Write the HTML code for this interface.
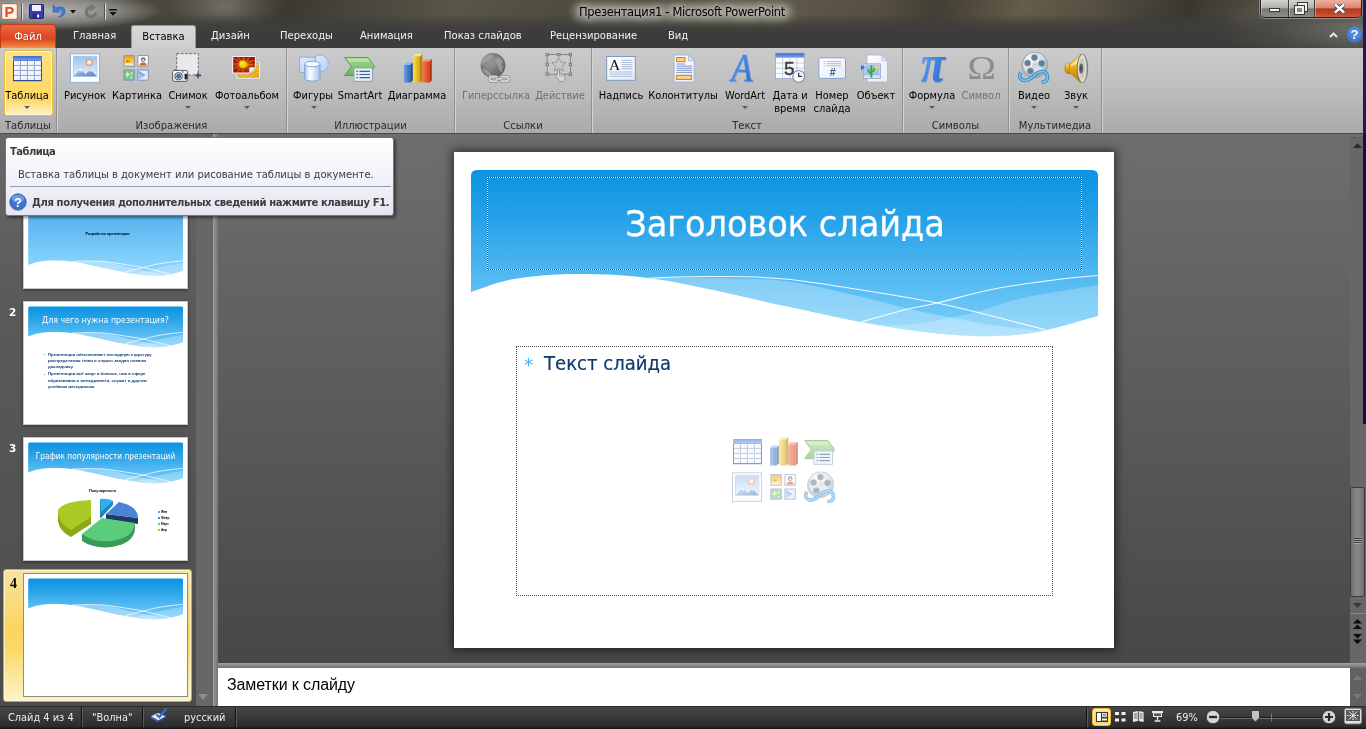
<!DOCTYPE html>
<html lang="ru">
<head>
<meta charset="utf-8">
<title>Презентация1 - Microsoft PowerPoint</title>
<style>
*{box-sizing:border-box;margin:0;padding:0}
html,body{width:1366px;height:729px;overflow:hidden;background:#5a5a5a}
body{position:relative;-webkit-font-smoothing:antialiased;font-family:"DejaVu Sans","Liberation Sans",sans-serif;font-size:10px;color:#000}
.abs{position:absolute}
#titlebar{position:absolute;left:0;top:0;width:1366px;height:48px;background:#45423e;overflow:hidden}
#tabrow{position:absolute;left:0;top:24px;width:1366px;height:24px;overflow:hidden}
#ribbon{position:absolute;left:0;top:48px;width:1366px;height:85px;background:linear-gradient(#cbcbcb,#bdbdbd 50%,#aaaaaa)}
#ribline{position:absolute;left:0;top:133px;width:1366px;height:1px;background:#484848}
#work{position:absolute;left:0;top:134px;width:1366px;height:572px;background:linear-gradient(#6e6e6e,#5c5c5c 45%,#444)}
#status{position:absolute;left:0;top:705px;width:1366px;height:24px;background:linear-gradient(#4a4a4a,#2e2e2e)}
#rightedge{position:absolute;left:1363px;top:0;width:3px;height:424px;background:linear-gradient(#1d1b54 0,#1d1b54 133px,#100d50 134px,#100d50 100%)}
#titlebar,#tabrow,#ribbon,#work,#status,#tip{will-change:transform}
/* ---- work area ---- */
#leftpane{position:absolute;left:0;top:0;width:213px;height:572px;background:linear-gradient(#686868,#5a5a5a 30%,#4c4c4c);overflow:hidden}
#lp-track{position:absolute;left:196px;top:0;width:17px;height:572px;background:#676767}
.thumb{position:absolute;left:23px;width:165px;height:124px;background:#fff;border:1px solid #c9c9c9;overflow:hidden;box-shadow:0 1px 3px rgba(0,0,0,.45)}
.thumb>svg{position:absolute;left:0;top:0}
.thumb.t4{border-color:#8d8d8d;box-shadow:none}
.tnum{position:absolute;left:9px;width:12px;font-weight:bold;font-size:10.5px;color:#fff;line-height:14px}
.tnum.sel4{color:#000;font-family:"Liberation Serif",serif;font-size:14px;left:10px}
.ttitle{position:absolute;left:0;width:163px;text-align:center;color:#fff;font-family:"DejaVu Sans",sans-serif;font-size:8.9px;line-height:14px;white-space:nowrap;letter-spacing:0;transform:scaleX(.9);transform-origin:50% 50%}
.t1title{font-family:"Liberation Sans",sans-serif;position:absolute;left:0;top:65px;width:163px;text-align:center;color:#000;font-weight:bold;font-size:3.6px;line-height:6px;white-space:nowrap;padding-left:4px}
.tbody{font-family:"Liberation Sans",sans-serif;position:absolute;left:20px;top:49.5px;list-style:none;font-size:4.25px;line-height:6.3px;color:#0c3b78;font-weight:bold;white-space:nowrap}
.tbody li{position:relative;padding-left:4px;margin-bottom:1px}
.tbody li:before{content:"";position:absolute;left:0;top:2.5px;width:1px;height:1px;background:#2fb0f0}
.ctitle{font-family:"Liberation Sans",sans-serif;position:absolute;left:65px;top:51px;font-size:3.8px;font-weight:bold;line-height:5px;white-space:nowrap}
.leg{font-family:"Liberation Sans",sans-serif;position:absolute;left:134px;font-size:3.2px;line-height:4px;font-weight:bold;white-space:nowrap}
.leg i{display:inline-block;width:2px;height:2px;margin-right:1px;vertical-align:middle}
#sel{position:absolute;left:3px;top:435px;width:189px;height:133px;border:1.5px solid #dca136;border-radius:3px;background:linear-gradient(#f7e3a0,#fcd55f 45%,#fbd868 60%,#fdf4c8);box-shadow:inset 0 0 0 1px rgba(255,250,220,.7)}
#vsplit{position:absolute;left:213px;top:0;width:5px;height:572px;background:linear-gradient(90deg,#a2a2a2,#8a8a8a 40%,#747474)}
#slide{position:absolute;left:454px;top:18px;width:660px;height:496px;background:#fff;box-shadow:0 0 9px 2px rgba(0,0,0,.55)}
#ph-title{position:absolute;left:33px;top:25px;width:595px;height:93px;border:1px solid rgba(20,45,80,.75)}
#ph-title:after{content:'';position:absolute;left:-1px;top:-1px;right:-1px;bottom:-1px;border:1px dotted #fff}
#slidetitle{position:absolute;left:33px;top:48px;width:596px;text-align:center;color:#fff;font-family:"DejaVu Sans",sans-serif;font-size:35.7px;line-height:48px;white-space:nowrap;letter-spacing:0;transform:scaleX(.941);transform-origin:50% 50%;-webkit-text-stroke:.35px #fff}
#ph-body{position:absolute;left:62px;top:194px;width:537px;height:250px;border:1px dotted #4a4a4a}
#bul{position:absolute;left:70px;top:202px;color:#31b6fd;font-size:18px;line-height:22px}
#slidetext{position:absolute;left:90px;top:200px;color:#0b3a6e;font-family:"DejaVu Sans",sans-serif;font-size:19.5px;line-height:24px;white-space:nowrap;letter-spacing:0;transform:scaleX(.927);transform-origin:0 50%;-webkit-text-stroke:.2px #0b3a6e}
#vscroll{position:absolute;left:1350px;top:3px;width:16px;height:526px;background:#676767;border-top:1px solid #5a5a5a}
#vthumb{position:absolute;left:0px;top:349px;width:15px;height:110px;border:1px solid #3c3c3c;border-radius:2px;background:linear-gradient(90deg,#6e6e6e,#8a8a8a 50%,#707070)}
#vthumb i{display:block;width:7px;height:1px;background:#3a3a3a;margin:0 3px;position:relative;top:50px;margin-bottom:1px;box-shadow:0 1px 0 #aaa}
#vsep{position:absolute;left:0;top:475px;width:16px;height:1px;background:#8a8a8a}
#hsplit{position:absolute;left:218px;top:529px;width:1148px;height:5px;background:linear-gradient(#a0a0a0,#8a8a8a 50%,#6e6e6e)}
#notes{position:absolute;left:218px;top:534px;width:1132px;height:38px;background:#fff;font-family:"Liberation Sans",sans-serif;font-size:16px;line-height:19px;padding:7px 0 0 9px;color:#000;letter-spacing:-.1px}
#nscroll{position:absolute;left:1350px;top:534px;width:16px;height:38px;background:#616161}
/* ---- title bar ---- */
#titlebar{height:48px;background:
 radial-gradient(ellipse 150px 40px at 1366px 28px,rgba(150,148,138,.6),rgba(120,118,110,.25) 60%,rgba(100,100,95,0) 100%),
 linear-gradient(rgba(60,60,58,0) 0,rgba(60,60,58,0) 14px,rgba(61,61,59,.75) 24px,#3d3d3b 31px,#3b3b3a 48px),
 linear-gradient(112deg,rgba(0,0,0,0) 0,rgba(0,0,0,0) 17%,rgba(40,36,28,.35) 21%,rgba(0,0,0,0) 25%,rgba(130,124,104,.28) 33%,rgba(0,0,0,0) 40%,rgba(35,32,26,.35) 47%,rgba(0,0,0,0) 52%,rgba(120,112,90,.3) 58%,rgba(0,0,0,0) 64%,rgba(40,36,30,.4) 68%,rgba(125,116,92,.32) 74%,rgba(0,0,0,0) 80%,rgba(30,28,24,.4) 86%,rgba(110,102,84,.25) 91%,rgba(20,20,20,.5) 100%),
 radial-gradient(ellipse 60px 30px at 225px 6px,rgba(140,136,124,.6),rgba(120,116,104,0) 100%),
 linear-gradient(90deg,#66635b 0,#524f46 9%,#47433a 13%,#48443a 30%,#565144 45%,#524d41 60%,#585243 75%,#4a463d 90%,#3a3835 100%)}
#glow-qat{position:absolute;left:-30px;top:-8px;width:190px;height:38px;background:radial-gradient(ellipse at 40% 50%,rgba(205,205,205,.8),rgba(180,180,180,.5) 45%,rgba(140,140,140,0) 72%)}
.qsep{position:absolute;top:3px;width:2px;height:17px;background:linear-gradient(90deg,#555 50%,#ddd 50%)}
#wglow{position:absolute;left:574px;top:4px;width:218px;height:16px;border-radius:8px;background:rgba(190,190,180,.62);filter:blur(5px)}
#wtitle{position:absolute;left:478px;top:4px;width:408px;text-align:center;font-size:11.5px;letter-spacing:-.34px;line-height:16px;color:#000;white-space:nowrap;
 text-shadow:0 0 5px rgba(200,200,192,.95),0 0 8px rgba(190,190,182,.95),0 0 11px rgba(180,180,172,.85),0 0 14px rgba(175,175,168,.75),0 0 6px rgba(200,200,192,.9)}
#wbtns{position:absolute;left:1260px;top:0;width:102px;height:18px;border:1px solid #1f1f1f;border-top:0;border-radius:0 0 5px 5px;overflow:hidden;box-shadow:0 0 0 1px rgba(255,255,255,.35)}
#wmin,#wmax{position:absolute;top:0;height:17px;background:linear-gradient(#d2d2ce,#b2b2ac 46%,#7a786f 52%,#8e8c84);border-right:1px solid #3a3a38;box-shadow:inset 1px 0 0 rgba(255,255,255,.35)}
#wmin{left:0;width:28px}#wmax{left:28px;width:26px}
#wmin i{position:absolute;left:8px;top:8px;width:11px;height:4px;background:#f4f4f4;border:1px solid #3a3a3a}
#wmax i{position:absolute;left:9px;top:3px;width:9px;height:8px;border:2px solid #f0f0f0;outline:1px solid #3a3a3a}
#wmax b{position:absolute;left:6px;top:6px;width:9px;height:8px;border:2px solid #f0f0f0;outline:1px solid #3a3a3a;background:#8a8880}
#wclose{position:absolute;left:54px;top:0;width:47px;height:17px;background:linear-gradient(#eeb0a0,#dc8472 46%,#b5381a 52%,#c44a2a 85%,#d06040);box-shadow:inset 1px 0 0 rgba(255,255,255,.35)}
#wclose svg{position:absolute;left:19px;top:4px}
/* ---- tab row ---- */
#tabrow{background:none}
#filetab{position:absolute;left:0;top:0;width:56px;height:24px;border-radius:4px 4px 0 0;background:linear-gradient(#ea6a40,#e2502c 40%,#de4724 60%,#ee8038 92%,#f29a48);border:1px solid #c23c14;border-bottom:0;color:#fff;text-align:center;font-size:10px;line-height:23px;text-shadow:0 0 2px rgba(120,30,0,.6)}
.tab{position:absolute;top:1px;height:22px;line-height:22px;color:#f2f2f2;font-size:10px;white-space:nowrap}
#acttab{position:absolute;left:131px;top:1px;width:65px;height:24px;border-radius:3px 3px 0 0;background:linear-gradient(#d8d8d8,#cdcdcd);border:1px solid #9a9a9a;border-bottom:0;color:#000;text-align:center;font-size:10px;line-height:21px}
/* ---- ribbon ---- */
.gsep{position:absolute;top:0;width:2px;height:85px;background:linear-gradient(90deg,#8c8c8c 50%,#d6d6d6 50%);opacity:.9}
.glab{position:absolute;top:71px;height:14px;line-height:14px;text-align:center;font-size:10px;letter-spacing:0;color:#2a2a2a;white-space:nowrap}
.rl{position:absolute;top:41px;width:120px;margin-left:-60px;text-align:center;font-size:9.9px;letter-spacing:0;line-height:13px;color:#000;white-space:nowrap}
.rl.dis{color:#727272}
.dd{position:absolute;top:58px;width:0;height:0;border:3px solid transparent;border-top:3.5px solid #5c5c5c;border-bottom:0}
#hotbtn{position:absolute;left:4px;top:2px;width:49px;height:66px;border:1px solid #edbd3e;border-radius:3px;background:linear-gradient(#fde38a,#fddb6e 35%,#fdd865 75%,#fdeaa8 92%,#fef2c8);box-shadow:inset 0 0 0 1px rgba(255,248,215,.85)}
.ic{position:absolute;top:4px;overflow:visible}
/* ---- tooltip ---- */
#tip{position:absolute;left:5px;top:137px;width:389px;height:79px;border:1px solid #767676;border-radius:3px;background:linear-gradient(#fff,#f4f4fa 45%,#e5e5f1);box-shadow:2px 2px 3px rgba(0,0,0,.45);color:#3c3c3c}
#tip-h{position:absolute;left:4px;top:7px;font-weight:bold;font-size:10px;letter-spacing:-.55px;line-height:14px;white-space:nowrap}
#tip-d{position:absolute;left:12px;top:30px;font-size:10px;letter-spacing:-.03px;line-height:14px;white-space:nowrap}
#tip-line{position:absolute;left:4px;top:48px;width:381px;height:1px;background:#8f9cab}
#tip-f{position:absolute;left:26px;top:58px;font-weight:bold;font-size:10px;letter-spacing:-.38px;line-height:14px;white-space:nowrap}
/* ---- status bar ---- */
#status{top:706px;height:23px;background:linear-gradient(#2a2a2a 0,#2a2a2a 1px,#454545 1px,#3c3c3c 40%,#2b2b2b 90%,#111 100%)}
.st{position:absolute;top:4.5px;line-height:14px;font-size:9.8px;letter-spacing:0px;color:#ececec;white-space:nowrap}
.ssep{position:absolute;top:1px;width:2px;height:20px;background:linear-gradient(90deg,#141414 50%,#5c5c5c 50%)}
#vnorm{position:absolute;left:1092px;top:2px;width:19px;height:18px;border:1px solid #e9b53a;border-radius:3px;background:linear-gradient(#fde9a2,#fbd55e 50%,#fdd868);box-shadow:inset 0 0 0 1px rgba(255,245,200,.7)}

</style>
</head>
<body>
<svg width="0" height="0" style="position:absolute">
<defs>
<linearGradient id="bluegrad" x1="0" y1="18" x2="0" y2="184" gradientUnits="userSpaceOnUse">
<stop offset="0" stop-color="#0b93e2"/><stop offset="0.3" stop-color="#27a2e8"/><stop offset="0.6" stop-color="#4db6f1"/><stop offset="1" stop-color="#7ccffa"/>
</linearGradient>
<linearGradient id="bluegrad1" x1="0" y1="18" x2="0" y2="446" gradientUnits="userSpaceOnUse">
<stop offset="0" stop-color="#0c94e2"/><stop offset="0.45" stop-color="#5ab3ee"/><stop offset="0.85" stop-color="#84d0fb"/><stop offset="1" stop-color="#8ad4fc"/>
</linearGradient>
<clipPath id="clip-slidebg"><path d="M17,24 Q17,18 23,18 L638,18 Q644,18 644,24 L644,164.0  C635.5,166.3 607.0,174.8 593.0,178.0 C579.0,181.2 572.0,182.0 560.0,183.0 C548.0,184.0 536.0,184.5 521.0,184.0 C506.0,183.5 489.0,182.3 470.0,180.0 C451.0,177.7 430.2,174.3 407.0,170.0 C383.8,165.7 364.2,161.0 331.0,154.0 C297.8,147.0 242.3,133.3 208.0,128.0 C173.7,122.7 149.7,122.2 125.0,122.0 C100.3,121.8 78.0,124.0 60.0,127.0 C42.0,130.0 24.2,137.8 17.0,140.0 Z"/></clipPath>
<symbol id="slidebg" viewBox="0 0 660 496">
<rect width="660" height="496" fill="#fff"/>
<path d="M17,24 Q17,18 23,18 L638,18 Q644,18 644,24 L644,164.0  C635.5,166.3 607.0,174.8 593.0,178.0 C579.0,181.2 572.0,182.0 560.0,183.0 C548.0,184.0 536.0,184.5 521.0,184.0 C506.0,183.5 489.0,182.3 470.0,180.0 C451.0,177.7 430.2,174.3 407.0,170.0 C383.8,165.7 364.2,161.0 331.0,154.0 C297.8,147.0 242.3,133.3 208.0,128.0 C173.7,122.7 149.7,122.2 125.0,122.0 C100.3,121.8 78.0,124.0 60.0,127.0 C42.0,130.0 24.2,137.8 17.0,140.0 Z" fill="url(#bluegrad)"/>
<g clip-path="url(#clip-slidebg)">
<path d="M195.0,126.0 C205.8,126.0 237.3,125.5 260.0,126.0 C282.7,126.5 307.7,126.2 331.0,129.0 C354.3,131.8 379.3,138.3 400.0,143.0 C420.7,147.7 438.8,153.2 455.0,157.0 C471.2,160.8 482.0,162.7 497.0,165.5 C512.0,168.3 529.0,171.8 545.0,174.0 C561.0,176.2 585.0,178.2 593.0,179.0 L644,200 L17,200 Z" fill="#fff" fill-opacity="0.28"/>
<path d="M644.0,133.0 C631.5,135.2 589.0,141.6 569.0,146.0 C549.0,150.4 536.0,156.2 524.0,159.5 C512.0,162.8 510.2,163.2 497.0,165.5 C483.8,167.8 461.2,172.9 445.0,173.5 C428.8,174.1 407.5,169.8 400.0,169.0 L400,200 L644,200 Z" fill="#fff" fill-opacity="0.22"/>
<path d="M195.0,126.0 C205.8,125.8 237.3,124.3 260.0,124.5 C282.7,124.7 304.3,124.4 331.0,127.0 C357.7,129.6 394.7,136.0 420.0,140.0 C445.3,144.0 464.7,147.3 483.0,151.0 C501.3,154.7 511.8,157.5 530.0,162.0 C548.2,166.5 581.7,175.3 592.0,178.0" fill="none" stroke="#fff" stroke-opacity="0.92" stroke-width="1.1"/>
<path d="M407.0,170.0 C414.2,168.0 437.3,161.2 450.0,158.0 C462.7,154.8 468.0,154.5 483.0,151.0 C498.0,147.5 520.5,140.8 540.0,137.0 C559.5,133.2 582.7,130.2 600.0,128.0 C617.3,125.8 636.7,124.2 644.0,123.5" fill="none" stroke="#fff" stroke-opacity="0.92" stroke-width="1.1"/>
</g>
</symbol>
<clipPath id="clip-thumbbg"><path d="M17,24 Q17,18 23,18 L638,18 Q644,18 644,24 L644,164.0  C635.5,166.3 607.0,174.8 593.0,178.0 C579.0,181.2 572.0,182.0 560.0,183.0 C548.0,184.0 536.0,184.5 521.0,184.0 C506.0,183.5 489.0,182.3 470.0,180.0 C451.0,177.7 430.2,174.3 407.0,170.0 C383.8,165.7 364.2,161.0 331.0,154.0 C297.8,147.0 242.3,133.3 208.0,128.0 C173.7,122.7 149.7,122.2 125.0,122.0 C100.3,121.8 78.0,124.0 60.0,127.0 C42.0,130.0 24.2,137.8 17.0,140.0 Z"/></clipPath>
<symbol id="thumbbg" viewBox="0 0 660 496">
<rect width="660" height="496" fill="#fff"/>
<path d="M17,24 Q17,18 23,18 L638,18 Q644,18 644,24 L644,164.0  C635.5,166.3 607.0,174.8 593.0,178.0 C579.0,181.2 572.0,182.0 560.0,183.0 C548.0,184.0 536.0,184.5 521.0,184.0 C506.0,183.5 489.0,182.3 470.0,180.0 C451.0,177.7 430.2,174.3 407.0,170.0 C383.8,165.7 364.2,161.0 331.0,154.0 C297.8,147.0 242.3,133.3 208.0,128.0 C173.7,122.7 149.7,122.2 125.0,122.0 C100.3,121.8 78.0,124.0 60.0,127.0 C42.0,130.0 24.2,137.8 17.0,140.0 Z" fill="url(#bluegrad)"/>
<g clip-path="url(#clip-thumbbg)">
<path d="M195.0,126.0 C205.8,126.0 237.3,125.5 260.0,126.0 C282.7,126.5 307.7,126.2 331.0,129.0 C354.3,131.8 379.3,138.3 400.0,143.0 C420.7,147.7 438.8,153.2 455.0,157.0 C471.2,160.8 482.0,162.7 497.0,165.5 C512.0,168.3 529.0,171.8 545.0,174.0 C561.0,176.2 585.0,178.2 593.0,179.0 L644,200 L17,200 Z" fill="#fff" fill-opacity="0.34"/>
<path d="M644.0,133.0 C631.5,135.2 589.0,141.6 569.0,146.0 C549.0,150.4 536.0,156.2 524.0,159.5 C512.0,162.8 510.2,163.2 497.0,165.5 C483.8,167.8 461.2,172.9 445.0,173.5 C428.8,174.1 407.5,169.8 400.0,169.0 L400,200 L644,200 Z" fill="#fff" fill-opacity="0.26"/>
<path d="M195.0,126.0 C205.8,125.8 237.3,124.3 260.0,124.5 C282.7,124.7 304.3,124.4 331.0,127.0 C357.7,129.6 394.7,136.0 420.0,140.0 C445.3,144.0 464.7,147.3 483.0,151.0 C501.3,154.7 511.8,157.5 530.0,162.0 C548.2,166.5 581.7,175.3 592.0,178.0" fill="none" stroke="#fff" stroke-opacity="0.92" stroke-width="3.4"/>
<path d="M407.0,170.0 C414.2,168.0 437.3,161.2 450.0,158.0 C462.7,154.8 468.0,154.5 483.0,151.0 C498.0,147.5 520.5,140.8 540.0,137.0 C559.5,133.2 582.7,130.2 600.0,128.0 C617.3,125.8 636.7,124.2 644.0,123.5" fill="none" stroke="#fff" stroke-opacity="0.92" stroke-width="3.4"/>
</g>
</symbol>
<clipPath id="clip-slidebg1"><path d="M17,24 Q17,18 23,18 L638,18 Q644,18 644,24 L644,426.0  C635.5,428.3 607.0,436.8 593.0,440.0 C579.0,443.2 572.0,444.0 560.0,445.0 C548.0,446.0 536.0,446.5 521.0,446.0 C506.0,445.5 489.0,444.3 470.0,442.0 C451.0,439.7 430.2,436.3 407.0,432.0 C383.8,427.7 364.2,423.0 331.0,416.0 C297.8,409.0 242.3,395.3 208.0,390.0 C173.7,384.7 149.7,384.2 125.0,384.0 C100.3,383.8 78.0,386.0 60.0,389.0 C42.0,392.0 24.2,399.8 17.0,402.0 Z"/></clipPath>
<symbol id="slidebg1" viewBox="0 0 660 496">
<rect width="660" height="496" fill="#fff"/>
<path d="M17,24 Q17,18 23,18 L638,18 Q644,18 644,24 L644,426.0  C635.5,428.3 607.0,436.8 593.0,440.0 C579.0,443.2 572.0,444.0 560.0,445.0 C548.0,446.0 536.0,446.5 521.0,446.0 C506.0,445.5 489.0,444.3 470.0,442.0 C451.0,439.7 430.2,436.3 407.0,432.0 C383.8,427.7 364.2,423.0 331.0,416.0 C297.8,409.0 242.3,395.3 208.0,390.0 C173.7,384.7 149.7,384.2 125.0,384.0 C100.3,383.8 78.0,386.0 60.0,389.0 C42.0,392.0 24.2,399.8 17.0,402.0 Z" fill="url(#bluegrad1)"/>
<g clip-path="url(#clip-slidebg1)">
<path d="M195.0,388.0 C205.8,388.0 237.3,387.5 260.0,388.0 C282.7,388.5 307.7,388.2 331.0,391.0 C354.3,393.8 379.3,400.3 400.0,405.0 C420.7,409.7 438.8,415.2 455.0,419.0 C471.2,422.8 482.0,424.7 497.0,427.5 C512.0,430.3 529.0,433.8 545.0,436.0 C561.0,438.2 585.0,440.2 593.0,441.0 L644,462 L17,462 Z" fill="#fff" fill-opacity="0.34"/>
<path d="M644.0,395.0 C631.5,397.2 589.0,403.6 569.0,408.0 C549.0,412.4 536.0,418.2 524.0,421.5 C512.0,424.8 510.2,425.2 497.0,427.5 C483.8,429.8 461.2,434.9 445.0,435.5 C428.8,436.1 407.5,431.8 400.0,431.0 L400,462 L644,462 Z" fill="#fff" fill-opacity="0.26"/>
<path d="M195.0,388.0 C205.8,387.8 237.3,386.3 260.0,386.5 C282.7,386.7 304.3,386.4 331.0,389.0 C357.7,391.6 394.7,398.0 420.0,402.0 C445.3,406.0 464.7,409.3 483.0,413.0 C501.3,416.7 511.8,419.5 530.0,424.0 C548.2,428.5 581.7,437.3 592.0,440.0" fill="none" stroke="#fff" stroke-opacity="0.92" stroke-width="3.4"/>
<path d="M407.0,432.0 C414.2,430.0 437.3,423.2 450.0,420.0 C462.7,416.8 468.0,416.5 483.0,413.0 C498.0,409.5 520.5,402.8 540.0,399.0 C559.5,395.2 582.7,392.2 600.0,390.0 C617.3,387.8 636.7,386.2 644.0,385.5" fill="none" stroke="#fff" stroke-opacity="0.92" stroke-width="3.4"/>
</g>
</symbol>
</defs>
</svg>

<svg width="0" height="0" style="position:absolute"><defs>
<linearGradient id="gTblH" x1="0" y1="0" x2="0" y2="1"><stop offset="0" stop-color="#3a69d2"/><stop offset="1" stop-color="#82a6ee"/></linearGradient>
<linearGradient id="gCell" x1="0" y1="0" x2="1" y2="1"><stop offset="0" stop-color="#fff"/><stop offset="1" stop-color="#e3e9f6"/></linearGradient>
<linearGradient id="gSky" x1="0" y1="0" x2="0" y2="1"><stop offset="0" stop-color="#9cc3f0"/><stop offset="1" stop-color="#e4f1fd"/></linearGradient>
<linearGradient id="gMtn" x1="0" y1="0" x2="1" y2="1"><stop offset="0" stop-color="#dfe8f6"/><stop offset=".5" stop-color="#8aa3d2"/><stop offset="1" stop-color="#5f7fbe"/></linearGradient>
<radialGradient id="gSun"><stop offset="0" stop-color="#fff6e6"/><stop offset=".6" stop-color="#fde0c8"/><stop offset="1" stop-color="#f08c5a"/></radialGradient>
<linearGradient id="gOr" x1="0" y1="0" x2="0" y2="1"><stop offset="0" stop-color="#f39a1e"/><stop offset=".6" stop-color="#fbd23c"/><stop offset="1" stop-color="#f6b04a"/></linearGradient>
<linearGradient id="gCyl" x1="0" y1="0" x2="1" y2="0"><stop offset="0" stop-color="#a9c6ee"/><stop offset=".35" stop-color="#fff"/><stop offset="1" stop-color="#a3c0ea"/></linearGradient>
<linearGradient id="gShp" x1="0" y1="0" x2="1" y2="1"><stop offset="0" stop-color="#e2edfc"/><stop offset="1" stop-color="#b4cff4"/></linearGradient>
<linearGradient id="gGrn" x1="0" y1="0" x2="0" y2="1"><stop offset="0" stop-color="#a8dc92"/><stop offset="1" stop-color="#63b452"/></linearGradient>
<linearGradient id="gBarB" x1="0" y1="0" x2="1" y2="0"><stop offset="0" stop-color="#6aa0e4"/><stop offset="1" stop-color="#2f68b8"/></linearGradient>
<linearGradient id="gBarY" x1="0" y1="0" x2="1" y2="0"><stop offset="0" stop-color="#fbe04a"/><stop offset="1" stop-color="#d8a20c"/></linearGradient>
<linearGradient id="gBarR" x1="0" y1="0" x2="1" y2="0"><stop offset="0" stop-color="#f47a52"/><stop offset="1" stop-color="#d8401a"/></linearGradient>
<radialGradient id="gGlobe" cx=".4" cy=".35" r=".7"><stop offset="0" stop-color="#9a9a9a"/><stop offset="1" stop-color="#5e5e5e"/></radialGradient>
<linearGradient id="gDoc" x1="0" y1="0" x2="1" y2="1"><stop offset="0" stop-color="#fff"/><stop offset="1" stop-color="#e6edf8"/></linearGradient>
<linearGradient id="gWA" x1="0" y1="0" x2="1" y2="1"><stop offset="0" stop-color="#7ab4f6"/><stop offset=".5" stop-color="#3f86e6"/><stop offset="1" stop-color="#2a62c4"/></linearGradient>
<radialGradient id="gReel" cx=".35" cy=".3" r=".8"><stop offset="0" stop-color="#fff"/><stop offset=".6" stop-color="#d4d8de"/><stop offset="1" stop-color="#8e98a6"/></radialGradient>
<linearGradient id="gGold" x1="0" y1="0" x2="0" y2="1"><stop offset="0" stop-color="#fbe27a"/><stop offset=".5" stop-color="#e8a818"/><stop offset="1" stop-color="#b87808"/></linearGradient>
<linearGradient id="gCone" x1="0" y1="0" x2="1" y2="0"><stop offset="0" stop-color="#8a8678"/><stop offset=".5" stop-color="#e8e8e8"/><stop offset="1" stop-color="#9a9a9a"/></linearGradient>
<radialGradient id="gBurst"><stop offset="0" stop-color="#f0e400"/><stop offset=".28" stop-color="#d8b000"/><stop offset=".42" stop-color="#cc4a0a"/><stop offset="1" stop-color="#98180a"/></radialGradient>

<!-- table icon 32x32 -->
<symbol id="i-table" viewBox="0 0 32 32">
 <rect x="2" y="4" width="29" height="25" fill="#2f4d90"/>
 <rect x="2" y="4" width="29" height="4.6" fill="url(#gTblH)"/>
 <rect x="3" y="9" width="27" height="19" fill="#92a7d2"/>
 <g fill="url(#gCell)"><rect x="3" y="9" width="6" height="4"/><rect x="10" y="9" width="6" height="4"/><rect x="17" y="9" width="6" height="4"/><rect x="24" y="9" width="6" height="4"/><rect x="3" y="14" width="6" height="4"/><rect x="10" y="14" width="6" height="4"/><rect x="17" y="14" width="6" height="4"/><rect x="24" y="14" width="6" height="4"/><rect x="3" y="19" width="6" height="4"/><rect x="10" y="19" width="6" height="4"/><rect x="17" y="19" width="6" height="4"/><rect x="24" y="19" width="6" height="4"/><rect x="3" y="24" width="6" height="4"/><rect x="10" y="24" width="6" height="4"/><rect x="17" y="24" width="6" height="4"/><rect x="24" y="24" width="6" height="4"/></g>
 <rect x="2" y="29" width="29" height="1" fill="#2f4d90" opacity=".25"/>
</symbol>

<!-- picture icon -->
<symbol id="i-pic" viewBox="0 0 32 32">
 <rect x="1.5" y="1.8" width="29" height="28.6" fill="#fafdff" stroke="#9ab0d2"/>
 <rect x="4.6" y="4.3" width="23.2" height="20" fill="url(#gSky)" stroke="#a9c0e2" stroke-width=".8"/>
 <circle cx="20.3" cy="10.4" r="3.2" fill="url(#gSun)" stroke="#ee8a5c" stroke-width=".7"/>
 <path d="M4.8,24.2 L11.2,16.4 L16.5,22 L21.8,17.4 L27.6,24.2 Z" fill="url(#gMtn)"/>
 <path d="M11.2,16.4 L9,19.2 L11,18.6 L12.5,20 L13.4,18.6 Z M21.8,17.4 L19.8,19.4 L21.6,19 L23,20 L23.6,19.4 Z" fill="#fff" opacity=".9"/>
</symbol>

<!-- clip art -->
<symbol id="i-clip" viewBox="0 0 32 32">
 <rect x="2.9" y="3.6" width="10.4" height="10.6" fill="url(#gOr)" stroke="#8496b6"/>
 <rect x="3.6" y="11.4" width="9" height="2.2" fill="#fde7c0"/>
 <path d="M5.5,8 L9.5,9.6 L5.5,10.2 Z" fill="#d8501a"/>
 <rect x="16.9" y="3.6" width="10.4" height="10.6" fill="#fff" stroke="#8496b6"/>
 <circle cx="22.2" cy="7.6" r="2.4" fill="#6e6e6e"/><circle cx="22.2" cy="8" r="1.3" fill="#e8d2c0"/>
 <path d="M18.6,13.6 Q18.8,10.4 22.2,10.4 Q25.6,10.4 25.8,13.6 Z" fill="#e2601a"/>
 <rect x="2.9" y="18" width="10.4" height="10.2" fill="#6fc49a" stroke="#8496b6"/>
 <path d="M6.5,19 L7.4,21.6 L10,22.5 L7.4,23.4 L6.5,26 L5.6,23.4 L3.6,22.5 L5.6,21.6 Z" fill="#f6f07a"/>
 <path d="M10.8,19.2 L11.3,20.7 L12.7,21.2 L11.3,21.7 L10.8,23.2 L10.3,21.7 L9,21.2 L10.3,20.7 Z M10.4,24 L10.8,25.2 L12,25.6 L10.8,26 L10.4,27.4 L10,26 L8.8,25.6 L10,25.2 Z" fill="#f6f07a"/>
 <rect x="16.9" y="18" width="10.4" height="10.2" fill="#dfeafc" stroke="#8496b6"/>
 <path d="M17.6,18.8 L24.5,23 L17.6,27.6 Z" fill="#7fa8ee"/><path d="M17.6,22 L22,23.2 L17.6,27.6 Z" fill="#a9c6f6"/>
</symbol>

<!-- screenshot -->
<symbol id="i-shot" viewBox="0 0 32 32">
 <rect x="4.7" y="1.6" width="21.6" height="21.4" fill="#e9e9e9" stroke="#5d6d84" stroke-width="1" stroke-dasharray="2.6 1.6"/>
 <path d="M23.2,23.4 H29 M26.1,20.6 V26.2" stroke="#3e4a5e" stroke-width="1.6"/>
 <rect x="0.6" y="18.4" width="15" height="11" rx="1.6" fill="#e4e6ea" stroke="#5a6270" stroke-width="1"/>
 <rect x="1.4" y="19.2" width="13.4" height="2.2" fill="#fafafa"/>
 <rect x="12.6" y="21.8" width="2.6" height="5.6" fill="#22262e"/>
 <rect x="2.4" y="17.4" width="3" height="1.4" fill="#5a6270"/>
 <circle cx="6.6" cy="24.2" r="3.7" fill="#f0f2f6" stroke="#4a5260" stroke-width="1"/>
 <circle cx="6.6" cy="24.2" r="2" fill="#3a86dc" stroke="#1c3a66" stroke-width=".8"/>
 <circle cx="10.8" cy="19.9" r=".8" fill="#3a6ac0"/>
</symbol>

<!-- photo album -->
<symbol id="i-album" viewBox="0 0 32 32">
 <rect x="5.9" y="9.2" width="24.4" height="17.8" fill="#fff" stroke="#b4bccc" stroke-width=".9"/>
 <rect x="7.2" y="10.4" width="21.8" height="15.4" fill="#eaa41c"/>
 <path d="M7.2,25.8 L29,12 M12,25.8 L29,16 M18,25.8 L29,20 M7.2,20 L22,10.4" stroke="#f8d040" stroke-width="1.3" opacity=".8"/>
 <path d="M1.8,3.8 H26.2 V15.5 L19.5,21.9 H1.8 Z" fill="#fff" stroke="#b4bccc" stroke-width=".9"/>
 <path d="M3.2,5.1 H24.9 V15 L18.9,20.6 H3.2 Z" fill="url(#gBurst)"/>
 <path d="M13,12 L3.2,6 M13,12 L8,5.1 M13,12 L14,5.1 M13,12 L20,5.1 M13,12 L24.9,8 M13,12 L24.9,13 M13,12 L3.2,12 M13,12 L3.2,17 M13,12 L7,20.6 M13,12 L13,20.6" stroke="#f08a1a" stroke-width=".9" opacity=".75"/>
 <circle cx="12.8" cy="12.2" r="3.6" fill="#e2d806"/><circle cx="12" cy="11.4" r="1.7" fill="#f6f060" opacity=".8"/>
 <path d="M26.2,15.4 L19.4,21.9 L19.2,16.6 Q19.4,15.2 21,15.3 Z" fill="#f2f4f8" stroke="#a0a8b8" stroke-width=".6"/>
</symbol>

<!-- shapes -->
<symbol id="i-shapes" viewBox="0 0 32 32">
 <circle cx="23" cy="11.4" r="8.4" fill="url(#gShp)" stroke="#8fb0e2" stroke-width=".9"/>
 <rect x="2.7" y="5.1" width="15.6" height="15.4" fill="url(#gShp)" stroke="#86a6dc" stroke-width=".9"/>
 <path d="M7.6,12 V26.4 A7.7,2.7 0 0 0 23,26.4 V12 Z" fill="url(#gCyl)" stroke="#7f9fd4" stroke-width=".9"/>
 <ellipse cx="15.3" cy="12" rx="7.7" ry="2.7" fill="#f4f8ff" stroke="#7f9fd4" stroke-width=".9"/>
</symbol>

<!-- smartart -->
<symbol id="i-smart" viewBox="0 0 32 32">
 <path d="M0.6,5.5 H24 L30.6,14.6 L24,23.6 H0.6 L7.4,14.6 Z" fill="url(#gGrn)" stroke="#5aa34a" stroke-width="1"/>
 <path d="M2.4,6.5 H23.5 L26,10 H5 Z" fill="#c6ecb6" opacity=".55"/>
 <rect x="9.9" y="15.9" width="18.6" height="13.4" fill="#e6eef6" stroke="#8797b5" stroke-width=".9" opacity=".96"/>
 <path d="M12.5,19.4 H14 M15.5,19.4 H26 M12.5,22.5 H14 M15.5,22.5 H26 M12.5,25.6 H14 M15.5,25.6 H26" stroke="#3d5c9e" stroke-width="1.1"/>
</symbol>

<!-- chart -->
<symbol id="i-chart" viewBox="0 0 32 32">
 <path d="M2,13 L4.6,10.6 H10.8 L8.4,13 Z" fill="#8ab8ee"/><rect x="2" y="13" width="6.4" height="17.5" fill="url(#gBarB)"/><path d="M8.4,13 L10.8,10.6 V28.4 L8.4,30.5 Z" fill="#224f94"/>
 <path d="M11,4.4 L13.6,2 H20.4 L18,4.4 Z" fill="#fdec80"/><rect x="11" y="4.4" width="7" height="26.1" fill="url(#gBarY)"/><path d="M18,4.4 L20.4,2 V28.4 L18,30.5 Z" fill="#b8860a"/>
 <path d="M20.2,9.4 L22.8,7 H29.8 L27.4,9.4 Z" fill="#f89a7a"/><rect x="20.2" y="9.4" width="7.2" height="21.1" fill="url(#gBarR)"/><path d="M27.4,9.4 L29.8,7 V28.4 L27.4,30.5 Z" fill="#b4300e"/>
</symbol>
</defs></svg>
<svg width="0" height="0" style="position:absolute"><defs>
<!-- hyperlink (disabled) -->
<symbol id="i-link" viewBox="0 0 32 32">
 <circle cx="14" cy="13.4" r="12.4" fill="url(#gGlobe)"/>
 <path d="M5,5.6 Q8.6,2.6 13.4,2.6 Q14.6,5 11.4,6.4 Q9.6,9.4 6.6,10 Q4.6,12.6 2.6,12.4 Q2.6,8.4 5,5.6 Z M18.4,4 Q22.6,6.6 24.4,10.4 Q22.4,10.4 22,13 Q24.6,16.4 22.6,20.4 Q19.6,18 19.4,14.4 Q16.4,11.4 17.4,7.4 Z M3.4,16.4 Q7.4,16.4 9.4,19.4 Q13,21 12.4,25 Q6,23.4 3.4,16.4 Z" fill="#a6a6a6" opacity=".75"/>
 <path d="M2.4,11 Q9,13 13,20 M12,1.4 Q17,7 15.4,14 M8,2.6 Q20,9 25.6,16" stroke="#a2a2a2" stroke-width=".7" fill="none" opacity=".8"/>
 <g fill="none" stroke="#8a8a8a" stroke-width="3.4"><rect x="10.5" y="24.6" width="8" height="4.6" rx="2.3"/><rect x="21.5" y="24.6" width="8" height="4.6" rx="2.3"/></g>
 <g fill="none" stroke="#dcdcdc" stroke-width="1.9"><rect x="10.5" y="24.6" width="8" height="4.6" rx="2.3"/><rect x="21.5" y="24.6" width="8" height="4.6" rx="2.3"/></g>
 <path d="M16.5,26.9 H23.5" stroke="#8a8a8a" stroke-width="3"/><path d="M16.5,26.9 H23.5" stroke="#dcdcdc" stroke-width="1.6"/>
</symbol>

<!-- action (disabled) -->
<symbol id="i-action" viewBox="0 1 32 32">
 <rect x="5.2" y="3.6" width="23.2" height="19.6" fill="#cfcfcf" fill-opacity=".45" stroke="#7e7e7e" stroke-width=".9"/>
 <path d="M16.8,6.4 L18.9,11.2 L24,11.6 L20.1,15 L21.4,20 L16.8,17.3 L12.2,20 L13.5,15 L9.6,11.6 L14.7,11.2 Z" fill="none" stroke="#9a9a9a" stroke-width="1"/>
 <g fill="#c8c8c8" stroke="#6e6e6e" stroke-width=".8">
  <rect x="4" y="2.4" width="2.4" height="2.4"/><rect x="15.6" y="2.4" width="2.4" height="2.4"/><rect x="27.2" y="2.4" width="2.4" height="2.4"/>
  <rect x="4" y="12.2" width="2.4" height="2.4"/><rect x="27.2" y="12.2" width="2.4" height="2.4"/>
  <rect x="4" y="22" width="2.4" height="2.4"/><rect x="27.2" y="22" width="2.4" height="2.4"/>
 </g>
 <path d="M16.2,28 L13.2,24.4 Q12.6,23 14,23 L15.4,24 V20 Q15.4,18.8 16.5,18.8 Q17.6,18.8 17.6,20 V22.6 Q18.8,22 19.4,23 Q20.6,22.6 21.2,23.6 Q23,23.2 23,25 V27.6 Q23,29.6 21.6,30.6 H17.6 Q16.6,29.6 16.2,28 Z" fill="#d8d8d8" stroke="#8a8a8a" stroke-width=".9"/>
 <path d="M17.6,23 V25.4 M19.4,23.4 V25.6 M21.2,24 V25.8" stroke="#8a8a8a" stroke-width=".7"/>
</symbol>

<!-- text box -->
<symbol id="i-textbox" viewBox="0 0 32 32">
 <rect x="1.7" y="4.5" width="28.6" height="23.8" fill="url(#gDoc)" stroke="#7d96c2" stroke-width="1"/>
 <text x="9.6" y="17.6" text-anchor="middle" font-family="Liberation Serif,serif" font-size="15.5" fill="#111">A</text>
 <path d="M16.6,8.4 H27.4 M16.6,10.5 H27.4 M16.6,12.6 H27.4 M16.6,14.7 H27.4 M16.6,16.8 H27.4 M4.4,20 H27.4 M4.4,22.2 H27.4 M4.4,24.4 H27.4" stroke="#a5b9d8" stroke-width=".9"/>
</symbol>

<!-- header/footer -->
<symbol id="i-hf" viewBox="0 0 32 32">
 <path d="M6.2,3 H20.5 L26.2,8.8 V30 H6.2 Z" fill="url(#gDoc)" stroke="#9fb2d2" stroke-width=".9"/>
 <path d="M20.5,3 V8.8 H26.2 Z" fill="#dbe6f6" stroke="#9fb2d2" stroke-width=".7"/>
 <rect x="8.6" y="5.6" width="8.4" height="4" fill="#fbd49a" stroke="#e4851a" stroke-width="1.2"/>
 <rect x="8.6" y="23.4" width="14.8" height="4" fill="#fbd49a" stroke="#e4851a" stroke-width="1.2"/>
 <path d="M8.4,12 H17 M8.4,14.1 H24 M8.4,16.2 H24 M8.4,18.3 H24 M8.4,20.4 H24" stroke="#6f8ccc" stroke-width=".9"/>
</symbol>

<!-- wordart -->
<symbol id="i-wordart" viewBox="0 0 32 32">
 <g transform="translate(15.8,29.4) scale(.86,1)">
 <text x="0" y="0" text-anchor="middle" font-family="Liberation Serif,serif" font-style="italic" font-size="40.5" fill="#24509c" stroke="#24509c" stroke-width=".6" opacity=".3" transform="translate(1,.9)">A</text>
 <text x="0" y="0" text-anchor="middle" font-family="Liberation Serif,serif" font-style="italic" font-size="40.5" fill="url(#gWA)" stroke="#4a8ce8" stroke-width=".6">A</text>
 </g>
</symbol>

<!-- date & time -->
<symbol id="i-date" viewBox="0 0 32 32">
 <rect x="1.6" y="1.2" width="28.6" height="25.4" fill="#fdfdff" stroke="#8fa6d4" stroke-width=".8"/>
 <rect x="1.6" y="1.2" width="28.6" height="4.6" fill="url(#gTblH)"/>
 <path d="M8.6,5.8 V26.6 M15.8,5.8 V26.6 M23,5.8 V26.6 M1.6,11 H30.2 M1.6,16.2 H30.2 M1.6,21.4 H30.2" stroke="#c3c9d6" stroke-width=".9"/>
 <text x="15.4" y="22.7" text-anchor="middle" font-family="Liberation Sans,sans-serif" font-size="19" fill="#404040" stroke="#404040" stroke-width=".5">5</text>
 <circle cx="24.7" cy="24.4" r="5.9" fill="#f6f8fc" stroke="#7f8aa0" stroke-width="1.1"/>
 <circle cx="24.7" cy="24.4" r="4.6" fill="none" stroke="#cdd6e6" stroke-width=".8" stroke-dasharray=".7 1.7"/>
 <path d="M24.7,20.8 V24.4 H27.8" stroke="#222" stroke-width="1.1" fill="none"/>
</symbol>

<!-- slide number -->
<symbol id="i-num" viewBox="0 0 32 32">
 <rect x="2.9" y="5.8" width="26.6" height="20.6" rx="1.8" fill="url(#gDoc)" stroke="#86a0cf" stroke-width="1"/>
 <path d="M7.6,9.6 H9 M10.4,9.6 H25 M7.6,11.7 H9 M10.4,11.7 H25 M7.6,13.8 H9 M10.4,13.8 H25" stroke="#a3acbe" stroke-width=".8"/>
 <text x="16.6" y="24.4" text-anchor="middle" font-family="Liberation Sans,sans-serif" font-weight="bold" font-size="10.5" fill="#3b5aa4">#</text>
</symbol>

<!-- object -->
<symbol id="i-obj" viewBox="0 0 32 32">
 <path d="M8,3 H23 L28.6,8.8 V30 H8 Z" fill="url(#gDoc)" stroke="#a8b8d4" stroke-width=".9"/>
 <path d="M23,3 V8.8 H28.6 Z" fill="#dbe6f6" stroke="#a8b8d4" stroke-width=".7"/>
 <rect x="4.4" y="11.8" width="17" height="14.8" fill="#cfdcf2" stroke="#94a8cc" stroke-width=".8"/>
 <rect x="5.4" y="12.8" width="15" height="8.8" fill="#aac4ec"/>
 <rect x="5.4" y="21.6" width="15" height="1.8" fill="#7f96c2"/><path d="M6,22.5 H20" stroke="#dfe8f8" stroke-width=".8" stroke-dasharray="1.4 1"/>
 <rect x="5.4" y="23.4" width="15" height="2.4" fill="#dfe6f2"/>
 <circle cx="17.4" cy="15.6" r="1.9" fill="#f6dc5a" stroke="#d8b43a" stroke-width=".5"/>
 <path d="M11.4,25.6 V14.4 Q11.4,13.2 12.4,13.2 Q13.4,13.2 13.4,14.4 V25.6 Z" fill="#35a83c"/>
 <path d="M11.6,20.6 Q9.2,20.6 9.2,17.2 M13.2,19.4 Q15.4,19.4 15.4,16.6" stroke="#35a83c" stroke-width="1.5" fill="none" stroke-linecap="round"/>
 <path d="M2,13 L6,15.6 L2,18.2 Z" fill="#2a6ee4"/>
</symbol>

<!-- formula -->
<symbol id="i-pi" viewBox="0 0 32 32">
 <g transform="translate(16.8,29) scale(.82,.98)">
 <text x="0" y="0" text-anchor="middle" font-family="Liberation Serif,serif" font-style="italic" font-weight="bold" font-size="54" fill="#2552a6" opacity=".3" transform="translate(1,.9)">π</text>
 <text x="0" y="0" text-anchor="middle" font-family="Liberation Serif,serif" font-style="italic" font-weight="bold" font-size="54" fill="url(#gWA)">π</text>
 </g>
</symbol>

<!-- symbol (disabled) -->
<symbol id="i-omega" viewBox="0 0 32 32">
 <text transform="translate(15.8,26.6) scale(1.16,1)" x="0" y="0" text-anchor="middle" font-family="Liberation Serif,serif" font-size="33" fill="#8c8c8c">Ω</text>
</symbol>

<!-- video -->
<symbol id="i-video" viewBox="0 0 32 32">
 <ellipse cx="15.6" cy="14" rx="12.6" ry="12.6" fill="#aab2be"/>
 <circle cx="17" cy="12.8" r="12.6" fill="url(#gReel)" stroke="#8f99a8" stroke-width=".8"/>
 <g fill="#5f7f92" stroke="#8ea2b0" stroke-width=".6">
  <circle cx="16.4" cy="5.6" r="3.1"/><circle cx="9.6" cy="11" r="3.1"/><circle cx="23.6" cy="11.4" r="3.1"/><circle cx="12.4" cy="19" r="3.1"/><circle cx="21.6" cy="19" r="3.1" fill="#dfe4ea" stroke="none"/>
 </g>
 <circle cx="16.8" cy="12.8" r="2.2" fill="#f4f6f8" stroke="#a8b0bc" stroke-width=".7"/><circle cx="16.8" cy="12.8" r=".7" fill="#7f8a98"/>
 <path d="M3,20.4 Q-0.4,25.6 4.4,28 Q10,29.6 15,24.6 Q19.6,19.2 25.4,19.4 Q29.8,20.4 29.4,26.4 Q28.6,29.8 23.4,30.4" fill="none" stroke="#2a78b6" stroke-width="3.5" stroke-linecap="butt"/>
 <path d="M3,20.4 Q-0.4,25.6 4.4,28 Q10,29.6 15,24.6 Q19.6,19.2 25.4,19.4 Q29.8,20.4 29.4,26.4 Q28.6,29.8 23.4,30.4" fill="none" stroke="#57b0e8" stroke-width="2.5"/>
 <path d="M3,20.4 Q-0.4,25.6 4.4,28 Q10,29.6 15,24.6 Q19.6,19.2 25.4,19.4 Q29.8,20.4 29.4,26.4 Q28.6,29.8 23.4,30.4" fill="none" stroke="#cfeafa" stroke-width=".9" stroke-dasharray="1 1.3"/>
</symbol>

<!-- sound -->
<symbol id="i-sound" viewBox="0 0 32 32">
 <path d="M8.6,11 Q4.8,11.6 4.8,16.6 Q4.8,21.4 8.6,22 Q9.6,22.2 10,21.2 L10,11.8 Q9.6,10.8 8.6,11 Z" fill="url(#gGold)" stroke="#a87408" stroke-width=".5"/>
 <path d="M9.4,12.4 Q14,9 20,2.6 L22,2.8 V30 L20,30.4 Q14,24 9.4,20.6 Z" fill="url(#gGold)" stroke="#a87408" stroke-width=".5"/>
 <path d="M11,12.6 Q15,9.4 19.6,4.6 L19.6,10 Q15,13 11,14.6 Z" fill="#fdf0a8" opacity=".75"/>
 <ellipse cx="22.4" cy="16.4" rx="5.3" ry="14.2" fill="url(#gCone)" stroke="#7e7a6c" stroke-width=".9"/>
 <ellipse cx="22" cy="16.4" rx="3.7" ry="11.6" fill="#c9c9c4" stroke="#f4f4f4" stroke-width=".7"/>
 <ellipse cx="21.2" cy="16.4" rx="2" ry="5" fill="#6c6a58"/>
 <ellipse cx="20.8" cy="16.4" rx="1" ry="2.6" fill="#4c4a3e"/>
</symbol>
</defs></svg>

<div id="titlebar">
<div id="glow-qat"></div>
<!-- app icon -->
<svg class="abs" style="left:1px;top:3px" width="17" height="17" viewBox="0 0 17 17">
  <rect x="0.5" y="0.5" width="16" height="16" rx="2" fill="#f6d9c4" stroke="#d9662a"/>
  <rect x="2" y="2" width="13" height="13" rx="1" fill="#fff3ea"/>
  <text x="8.3" y="14" text-anchor="middle" font-family="Liberation Sans,sans-serif" font-weight="bold" font-size="14.5" fill="#d24e1c">P</text>
</svg>
<div class="qsep" style="left:21px"></div>
<!-- save -->
<svg class="abs" style="left:29px;top:4px" width="15" height="15" viewBox="0 0 15 15">
  <rect x="0.5" y="0.5" width="14" height="14" rx="1" fill="#3a3fb5" stroke="#23266f"/>
  <rect x="3" y="1" width="9" height="6" fill="#eef0ff"/>
  <rect x="3.5" y="9.5" width="8" height="5" fill="#2a2d86"/>
  <rect x="8" y="10.5" width="2.2" height="3" fill="#e8e8ff"/>
</svg>
<!-- undo -->
<svg class="abs" style="left:51px;top:4px" width="16" height="15" viewBox="0 0 16 15">
  <path d="M2,1 L2,8 L9,8 L6.6,5.8 Q10.5,4 11,8 Q11.3,11.5 7.5,13.5 Q14.5,12 14,7 Q13,0.8 5,3.8 Z" fill="#3d7fe0" stroke="#2458b0" stroke-width=".6"/>
</svg>
<svg class="abs" style="left:70px;top:10px" width="6" height="4"><path d="M0,0 L6,0 L3,3.5 Z" fill="#111"/></svg>
<!-- redo (disabled) -->
<svg class="abs" style="left:84px;top:4px" width="15" height="15" viewBox="0 0 15 15">
  <path d="M6.2,3.6 A4.6,4.6 0 1 0 11.6,8.6" fill="none" stroke="#737373" stroke-width="3.2"/>
  <path d="M6.4,0 L11.8,3.6 L6.4,7.4 Z" fill="#737373"/>
</svg>
<div class="qsep" style="left:104px"></div>
<svg class="abs" style="left:109px;top:9px" width="8" height="7"><path d="M0,0 H8 V1.4 H0 Z M0.5,3 L7.5,3 L4,6.8 Z" fill="#111"/></svg>
<div id="wglow"></div>
<div id="wtitle">Презентация1 - Microsoft PowerPoint</div>
<!-- window buttons -->
<div id="wbtns">
  <div id="wmin"><i></i></div>
  <div id="wmax"><i></i><b></b></div>
  <div id="wclose"><svg width="11" height="9" viewBox="0 0 11 9"><path d="M1.8,1.2 L9.2,7.8 M9.2,1.2 L1.8,7.8" stroke="#3f3f4a" stroke-width="4.2" stroke-linecap="square"/><path d="M1.8,1.2 L9.2,7.8 M9.2,1.2 L1.8,7.8" stroke="#fff" stroke-width="2.5" stroke-linecap="square"/></svg></div>
</div>
</div>
<div id="tabrow">
<div id="filetab">Файл</div>
<div class="tab" style="left:73px">Главная</div>
<div id="acttab">Вставка</div>
<div class="tab" style="left:211px">Дизайн</div>
<div class="tab" style="left:280px">Переходы</div>
<div class="tab" style="left:360px">Анимация</div>
<div class="tab" style="left:444px">Показ слайдов</div>
<div class="tab" style="left:550px">Рецензирование</div>
<div class="tab" style="left:668px">Вид</div>
<svg class="abs" style="left:1329px;top:8px" width="9" height="6"><path d="M1,5 L4.5,1.5 L8,5" fill="none" stroke="#eee" stroke-width="1.8"/></svg>
<svg class="abs" style="left:1346px;top:2px" width="17" height="17" viewBox="0 0 17 17">
  <circle cx="8.5" cy="8.5" r="8" fill="#3c78d2"/><circle cx="8.5" cy="7" r="6.5" fill="#5a93e6" opacity=".6"/>
  <text x="8.5" y="13" text-anchor="middle" font-family="Liberation Sans,sans-serif" font-weight="bold" font-size="13" fill="#fff">?</text>
</svg>
</div>
<div id="ribbon">
<!-- group separators -->
<div class="gsep" style="left:56px"></div><div class="gsep" style="left:286px"></div><div class="gsep" style="left:454px"></div>
<div class="gsep" style="left:591px"></div><div class="gsep" style="left:902px"></div><div class="gsep" style="left:1008px"></div><div class="gsep" style="left:1101px"></div>
<!-- group labels -->
<div class="glab" style="left:0;width:56px">Таблицы</div>
<div class="glab" style="left:57px;width:229px">Изображения</div>
<div class="glab" style="left:287px;width:167px">Иллюстрации</div>
<div class="glab" style="left:455px;width:136px">Ссылки</div>
<div class="glab" style="left:592px;width:310px">Текст</div>
<div class="glab" style="left:903px;width:105px">Символы</div>
<div class="glab" style="left:1009px;width:92px">Мультимедиа</div>
<!-- hot button -->
<div id="hotbtn"></div>
<!-- labels -->
<div class="rl" style="left:27px">Таблица</div><i class="dd" style="left:24px"></i>
<div class="rl" style="left:85px">Рисунок</div>
<div class="rl" style="left:137px">Картинка</div>
<div class="rl" style="left:188px">Снимок</div><i class="dd" style="left:185px"></i>
<div class="rl" style="left:247px">Фотоальбом</div><i class="dd" style="left:244px"></i>
<div class="rl" style="left:313px">Фигуры</div><i class="dd" style="left:311px"></i>
<div class="rl" style="left:360px">SmartArt</div>
<div class="rl" style="left:417px">Диаграмма</div>
<div class="rl dis" style="left:496px">Гиперссылка</div>
<div class="rl dis" style="left:560px">Действие</div>
<div class="rl" style="left:621px">Надпись</div>
<div class="rl" style="left:683px">Колонтитулы</div>
<div class="rl" style="left:745px">WordArt</div><i class="dd" style="left:742px"></i>
<div class="rl" style="left:790px">Дата и<br>время</div>
<div class="rl" style="left:832px">Номер<br>слайда</div>
<div class="rl" style="left:876px">Объект</div>
<div class="rl" style="left:932px">Формула</div><i class="dd" style="left:929px"></i>
<div class="rl dis" style="left:981px">Символ</div>
<div class="rl" style="left:1034px">Видео</div><i class="dd" style="left:1031px"></i>
<div class="rl" style="left:1076px">Звук</div><i class="dd" style="left:1073px"></i>
<svg class="ic" style="left:11px" width="32" height="32"><use href="#i-table"/></svg>
<svg class="ic" style="left:69px" width="32" height="32"><use href="#i-pic"/></svg>
<svg class="ic" style="left:121px" width="32" height="32"><use href="#i-clip"/></svg>
<svg class="ic" style="left:172px" width="32" height="32"><use href="#i-shot"/></svg>
<svg class="ic" style="left:230px" width="32" height="32"><use href="#i-album"/></svg>
<svg class="ic" style="left:297px" width="32" height="32"><use href="#i-shapes"/></svg>
<svg class="ic" style="left:344px" width="32" height="32"><use href="#i-smart"/></svg>
<svg class="ic" style="left:402px" width="32" height="32"><use href="#i-chart"/></svg>
<svg class="ic" style="left:479px" width="32" height="32"><use href="#i-link"/></svg>
<svg class="ic" style="left:542px" width="32" height="32"><use href="#i-action"/></svg>
<svg class="ic" style="left:605px" width="32" height="32"><use href="#i-textbox"/></svg>
<svg class="ic" style="left:668px" width="32" height="32"><use href="#i-hf"/></svg>
<svg class="ic" style="left:726px" width="32" height="32"><use href="#i-wordart"/></svg>
<svg class="ic" style="left:774px" width="32" height="32"><use href="#i-date"/></svg>
<svg class="ic" style="left:816px" width="32" height="32"><use href="#i-num"/></svg>
<svg class="ic" style="left:859px" width="32" height="32"><use href="#i-obj"/></svg>
<svg class="ic" style="left:916px" width="32" height="32"><use href="#i-pi"/></svg>
<svg class="ic" style="left:966px" width="32" height="32"><use href="#i-omega"/></svg>
<svg class="ic" style="left:1018px" width="32" height="32"><use href="#i-video"/></svg>
<svg class="ic" style="left:1060px" width="32" height="32"><use href="#i-sound"/></svg>

</div>
<div id="ribline"></div>
<div id="work">
<!-- left thumbnail pane -->
<div id="leftpane">
  <div id="lp-track"></div>
  <svg class="abs" style="left:198px;top:560px" width="10" height="6"><path d="M0,0 L10,0 L5,6 Z" fill="#8c8c8c"/></svg>
  <!-- slide 1 -->
  <div class="thumb" style="top:31px"><svg width="163" height="122" viewBox="0 0 660 496" preserveAspectRatio="none"><use href="#slidebg1"/></svg>
    <div class="t1title">Разработка презентации</div></div>
  <!-- slide 2 -->
  <div class="tnum" style="top:171px">2</div>
  <div class="thumb" style="top:167px"><svg width="163" height="122" viewBox="0 0 660 496" preserveAspectRatio="none"><use href="#thumbbg"/></svg>
    <div class="ttitle" style="top:11px;font-size:8.75px">Для чего нужна презентация?</div>
    <ul class="tbody">
      <li>Презентация обеспечивает наглядную структуру<br>распределения темы и служит заодно планом<br>докладчику.</li>
      <li>Презентация всё чаще и больше, чем в сфере<br>образования и менеджмента, служит и другим<br>учебным материалом.</li>
    </ul>
  </div>
  <!-- slide 3 -->
  <div class="tnum" style="top:307px">3</div>
  <div class="thumb" style="top:303px"><svg width="163" height="122" viewBox="0 0 660 496" preserveAspectRatio="none"><use href="#thumbbg"/></svg>
    <div class="ttitle" style="top:11px;font-size:8.2px">График популярности презентаций</div>
    <div class="ctitle">Популярность</div>
    <svg class="abs" style="left:30px;top:58.5px" width="90" height="56" viewBox="0 0 90 56">
      <!-- yellow-green slice -->
      <path d="M4,16 Q8,6 37,4 L37,27 L17,40 Q5,34 4,24 Z" fill="#8aa81a"/>
      <path d="M4,13 Q9,4 37,3 L37,20 L17,33 Q4,26 4,13 Z" fill="#a9cb23"/>
      <!-- cyan slice -->
      <path d="M46,2 L59,4 L59,8 L47,21 L46,21 Z" fill="#1f86bd"/>
      <path d="M46,2 Q54,1 59,4 L47,15 Z" fill="#2fb0f0"/>
      <!-- blue slice -->
      <path d="M52,17 L84,21 L84,27 L52,22 Z" fill="#1d3b66"/>
      <path d="M52,17 L65,5 Q84,9 84,21 Z" fill="#4a82d4"/>
      <!-- green slice -->
      <path d="M28,37 L28,44 Q40,52 58,50 Q80,46 81,32 L81,26 Z" fill="#3a9a57"/>
      <path d="M28,37 L48,21 L81,26 Q80,40 58,44 Q40,46 28,37 Z" fill="#5bcb7c"/>
    </svg>
    <div class="leg" style="top:72px"><i style="background:#2fb0f0"></i>Янв</div>
    <div class="leg" style="top:78px"><i style="background:#4a82d4"></i>Февр</div>
    <div class="leg" style="top:84px"><i style="background:#5bcb7c"></i>Март</div>
    <div class="leg" style="top:90px"><i style="background:#a9cb23"></i>Апр</div>
  </div>
  <!-- slide 4 selected -->
  <div id="sel"></div>
  <div class="tnum sel4" style="top:443px">4</div>
  <div class="thumb t4" style="top:439px"><svg width="163" height="122" viewBox="0 0 660 496" preserveAspectRatio="none"><use href="#thumbbg"/></svg></div>
</div>
<div id="vsplit"></div>

<!-- editing area -->
<div id="slide">
  <svg class="abs" style="left:0;top:0" width="660" height="496" viewBox="0 0 660 496"><use href="#slidebg"/></svg>
  <div id="ph-title"></div>
  <div id="slidetitle">Заголовок слайда</div>
  <div id="ph-body"></div>
  <div id="bul">*</div>
  <div id="slidetext">Текст слайда</div>
  <svg class="abs" style="left:0;top:0" width="660" height="496"><g opacity=".55">
  <svg x="277" y="283" width="32" height="32"><use href="#i-table"/></svg>
  <svg x="314" y="283" width="32" height="32"><use href="#i-chart"/></svg>
  <svg x="350" y="283" width="32" height="32"><use href="#i-smart"/></svg>
  <svg x="277" y="319" width="32" height="32"><use href="#i-pic"/></svg>
  <svg x="314" y="319" width="32" height="32"><use href="#i-clip"/></svg>
  <svg x="350" y="319.5" width="32" height="32"><use href="#i-video"/></svg>
  </g></svg>
</div>

<!-- right scrollbar -->
<div id="vscroll">
  <svg class="abs" style="left:3px;top:5px" width="9" height="5"><path d="M0,5 L4.5,0 L9,5 Z" fill="#2a2a2a"/></svg>
  <div id="vthumb"><i></i><i></i><i></i></div>
  <svg class="abs" style="left:3px;top:465px" width="9" height="5"><path d="M0,0 L9,0 L4.5,5 Z" fill="#3a3a3a"/></svg>
  <div id="vsep"></div>
  <svg class="abs" style="left:3px;top:481px" width="9" height="10"><path d="M0,4.5 L4.5,0 L9,4.5 Z M0,10 L4.5,5.5 L9,10 Z" fill="#0c0c0c"/></svg>
  <svg class="abs" style="left:3px;top:496px" width="9" height="10"><path d="M0,0 L9,0 L4.5,4.5 Z M0,5.5 L9,5.5 L4.5,10 Z" fill="#0c0c0c"/></svg>
</div>

<!-- notes -->
<div id="hsplit"></div>
<div id="notes">Заметки к слайду</div>
<div id="nscroll">
  <svg class="abs" style="left:3px;top:7px" width="9" height="5"><path d="M0,5 L4.5,0 L9,5 Z" fill="#7a7a7a"/></svg>
  <svg class="abs" style="left:3px;top:26px" width="9" height="5"><path d="M0,0 L9,0 L4.5,5 Z" fill="#7a7a7a"/></svg>
</div>
</div>
<div id="status">
<div class="st" style="left:8px">Слайд 4 из 4</div>
<div class="ssep" style="left:81px"></div>
<div class="st" style="left:92px">"Волна"</div>
<div class="ssep" style="left:142px"></div>
<svg class="abs" style="left:150px;top:1px" width="19" height="16" viewBox="0 0 19 16">
  <path d="M1,9.4 L8,6 L15.6,9.6 L8.4,13.4 Z" fill="#f2f4fa" stroke="#9aa6c0" stroke-width=".6"/>
  <path d="M1,9.4 L8.4,13.4 L8.4,15.2 L1,11.2 Z" fill="#3f62c8"/><path d="M8.4,13.4 L15.6,9.6 L15.6,11.4 L8.4,15.2 Z" fill="#2a48a8"/>
  <path d="M6.4,7.6 L9.4,10.2 L16.6,1.2" fill="none" stroke="#2f6ee0" stroke-width="2.2"/>
</svg>
<div class="st" style="left:184px">русский</div>
<div class="ssep" style="left:235px"></div>
<div class="ssep" style="left:1086px"></div>
<!-- view buttons -->
<div id="vnorm"></div>
<svg class="abs" style="left:1096px;top:6px" width="12" height="10" viewBox="0 0 12 10"><rect x="0" y="0" width="12" height="10" fill="#3a3a3a"/><rect x="1" y="1" width="4" height="8" fill="#fff"/><rect x="6" y="1" width="5" height="4" fill="#d8d8d8"/><rect x="7" y="2" width="3" height="2" fill="#9a9a9a"/><rect x="6" y="6.5" width="5" height="2" fill="#f4f4f4"/></svg>
<svg class="abs" style="left:1115px;top:6px" width="11" height="10" viewBox="0 0 11 10"><g fill="#f0f0f0"><rect x="0" y="0" width="4" height="3"/><rect x="6.5" y="0" width="4" height="3"/><rect x="0" y="6.5" width="4" height="3"/><rect x="6.5" y="6.5" width="4" height="3"/></g></svg>
<svg class="abs" style="left:1133px;top:5px" width="11" height="11" viewBox="0 0 11 11"><path d="M0,1 L4.8,0 V10 L0,11 Z M10.6,1 L5.8,0 V10 L10.6,11 Z" fill="#e8e8e8"/><path d="M1,3 H4 M1,5 H4 M1,7 H4 M6.6,3 H9.6 M6.6,5 H9.6 M6.6,7 H9.6" stroke="#444" stroke-width=".8"/></svg>
<svg class="abs" style="left:1152px;top:5px" width="11" height="11" viewBox="0 0 11 11"><path d="M0,0 H11 V2 H10 V6 H1 V2 H0 Z" fill="#e8e8e8"/><rect x="2" y="2.4" width="7" height="2.6" fill="#555"/><path d="M5.5,6 V9.4 M2.6,10 H8.4" stroke="#e8e8e8" stroke-width="1.3"/></svg>
<div class="st" style="left:1176px">69%</div>
<!-- zoom slider -->
<svg class="abs" style="left:1204px;top:2px" width="134" height="18" viewBox="0 0 134 18">
  <path d="M16,9.5 H118" stroke="#1c1c1c" stroke-width="1"/><path d="M16,10.5 H118" stroke="#6e6e6e" stroke-width="1"/>
  <path d="M67.5,5.5 V13.5" stroke="#7a7a7a" stroke-width="1"/>
  <circle cx="9" cy="9" r="7" fill="#b8b8b8" stroke="#2a2a2a" stroke-width="1"/><circle cx="9" cy="9" r="5.6" fill="#d8d8d8"/>
  <rect x="5" y="7.8" width="8" height="2.4" fill="#2a2a2a"/>
  <circle cx="125" cy="9" r="7" fill="#b8b8b8" stroke="#2a2a2a" stroke-width="1"/><circle cx="125" cy="9" r="5.6" fill="#d8d8d8"/>
  <path d="M121,9 H129 M125,5 V13" stroke="#2a2a2a" stroke-width="2.2"/>
  <path d="M47.5,2.5 H55.5 V10 L51.5,14 L47.5,10 Z" fill="#c4c4c4" stroke="#3a3a3a" stroke-width="1"/>
</svg>
<!-- fit button -->
<svg class="abs" style="left:1344px;top:2px" width="18" height="17" viewBox="0 0 18 17">
  <rect x=".5" y=".5" width="17" height="15.4" rx="2" fill="#e2e2e2" stroke="#8a8a8a"/>
  <rect x="2" y="2" width="14" height="11" fill="#5a5a5a"/>
  <path d="M9,3 V12 M3,7.5 H15" stroke="#f4f4f4" stroke-width="1.2" stroke-dasharray="1.5 1"/>
  <path d="M9,7.5 L5,3.5 M9,7.5 L13,3.5 M9,7.5 L5,11.5 M9,7.5 L13,11.5" stroke="#f4f4f4" stroke-width="1"/>
</svg>
</div>
<div id="tip">
  <div id="tip-h">Таблица</div>
  <div id="tip-d">Вставка таблицы в документ или рисование таблицы в документе.</div>
  <div id="tip-line"></div>
  <svg class="abs" style="left:3px;top:55px" width="18" height="18" viewBox="0 0 18 18">
    <circle cx="9" cy="9" r="8.2" fill="#3b74cf" stroke="#2a58a8" stroke-width=".8"/>
    <ellipse cx="9" cy="5.6" rx="6.4" ry="4.2" fill="#8fb6f0" opacity=".55"/>
    <text x="9" y="13.6" text-anchor="middle" font-family="Liberation Sans,sans-serif" font-weight="bold" font-size="13" fill="#fff">?</text>
  </svg>
  <div id="tip-f">Для получения дополнительных сведений нажмите клавишу F1.</div>
</div>

<div id="rightedge"></div>
</body>
</html>
